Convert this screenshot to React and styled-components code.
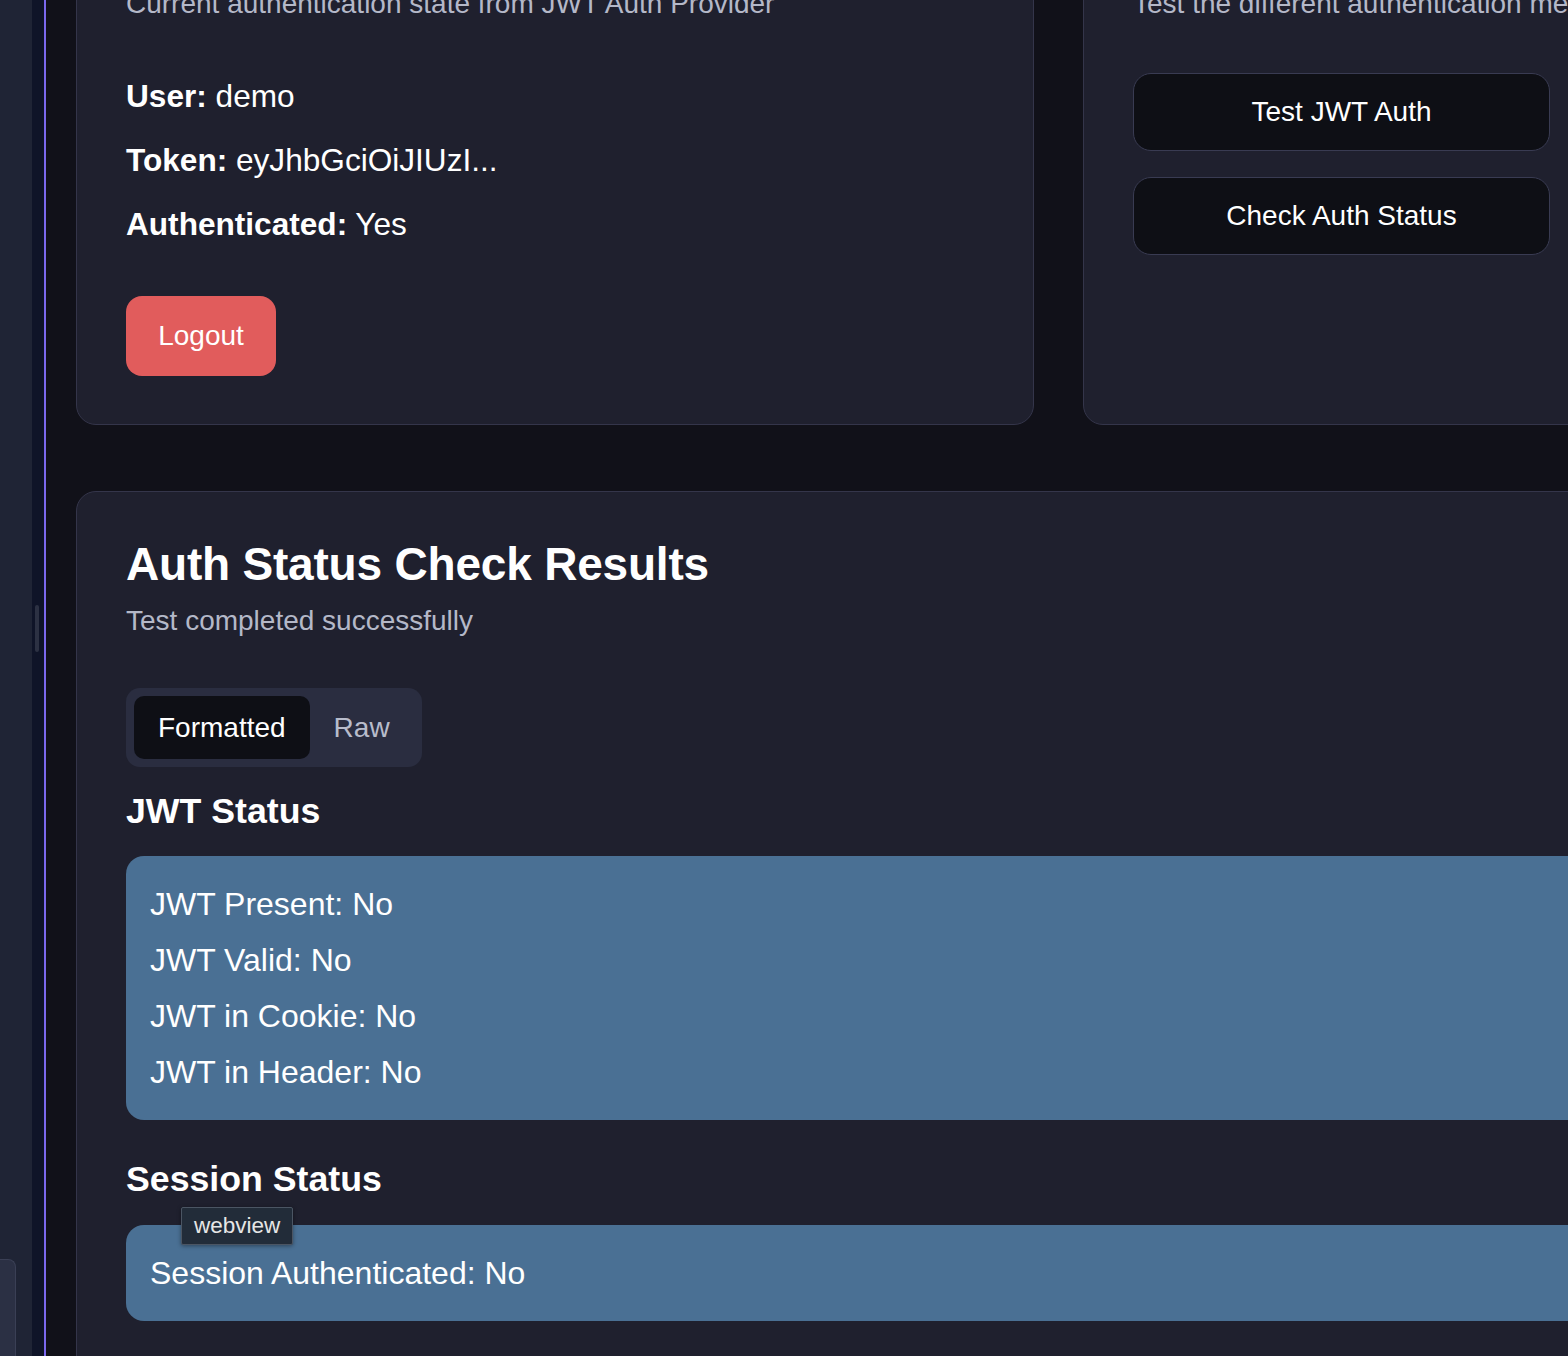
import React from 'react';
import styled, { createGlobalStyle } from 'styled-components';

const GlobalStyle = createGlobalStyle`
  html, body {
    margin: 0;
    padding: 0;
    background: #111119;
    overflow: hidden;
  }
  body {
    font-family: "Liberation Sans", Arial, Helvetica, sans-serif;
    color: #ffffff;
  }
`;

const Shell = styled.div`
  display: flex;
  width: 1568px;
  height: 1356px;
  overflow: hidden;
`;

const SideRail = styled.div`
  width: 32px;
  flex-shrink: 0;
  background: #1f2435;
  display: flex;
  flex-direction: column;
  justify-content: flex-end;
`;

const RailPanel = styled.div`
  width: 15px;
  height: 96px;
  background: #2b3044;
  border: 1px solid #3a3f55;
  border-left: none;
  border-bottom: none;
  border-top-right-radius: 8px;
`;

const Gutter = styled.div`
  width: 12px;
  flex-shrink: 0;
  background: #0f1428;
  display: flex;
  flex-direction: column;
  align-items: center;
  padding-top: 605px;
  box-sizing: border-box;
`;

const ResizeHandle = styled.div`
  width: 4px;
  height: 47px;
  margin-left: -2px;
  border-radius: 2px;
  background: #2c3143;
`;

const Divider = styled.div`
  width: 2px;
  flex-shrink: 0;
  background: #7b68ee;
`;

const Main = styled.main`
  flex: 1;
  min-width: 0;
  padding-left: 30px;
  overflow: hidden;
  background: #111119;
`;

const Content = styled.div`
  width: 1524px;
  margin-top: -68px;
  display: flex;
  flex-direction: column;
  gap: 66px;
`;

const TopRow = styled.div`
  display: grid;
  grid-template-columns: 958px 517px;
  column-gap: 49px;
`;

const Card = styled.section`
  width: ${(p) => p.$width || 'auto'};
  background: #1f202e;
  border: 1px solid #34354a;
  border-radius: 20px;
  padding: ${(p) => p.$padding || '50px 49px 48px'};
  box-sizing: border-box;
  display: flex;
  flex-direction: column;
  align-items: flex-start;
`;

const CardSubtitle = styled.p`
  margin: 0;
  font-size: 28px;
  line-height: 41px;
  color: #b4b8c8;
  white-space: nowrap;
`;

const InfoList = styled.div`
  margin-top: 49px;
  display: flex;
  flex-direction: column;
  gap: 17.5px;
`;

const InfoLine = styled.div`
  font-size: 31.6px;
  line-height: 46.5px;
  color: #ffffff;
  b {
    font-weight: 700;
  }
`;

const DangerButton = styled.button`
  margin-top: 48px;
  width: 150px;
  height: 80px;
  border: none;
  border-radius: 16px;
  background: #e15c5c;
  color: #ffffff;
  font-family: inherit;
  font-size: 28px;
`;

const ButtonStack = styled.div`
  margin-top: 49px;
  width: 100%;
  display: flex;
  flex-direction: column;
  gap: 26px;
`;

const ActionButton = styled.button`
  width: 100%;
  height: 78px;
  border: 1px solid #393b52;
  border-radius: 18px;
  background: #0e0f15;
  color: #ffffff;
  font-family: inherit;
  font-size: 28px;
`;

const ResultTitle = styled.h2`
  margin: 0;
  font-size: 46px;
  line-height: 55px;
  font-weight: 700;
  letter-spacing: -0.2px;
`;

const ResultSubtitle = styled(CardSubtitle)`
  margin-top: 8px;
`;

const TabList = styled.div`
  margin-top: 47px;
  display: flex;
  align-items: center;
  padding: 8px;
  background: #2a2d40;
  border-radius: 14px;
`;

const Tab = styled.button`
  height: 63px;
  padding: 2px ${(p) => (p.$active ? '24px' : '24px')} 0;
  border: none;
  border-radius: 10px;
  background: ${(p) => (p.$active ? '#0e0f15' : 'transparent')};
  color: ${(p) => (p.$active ? '#ffffff' : '#b8bccb')};
  font-family: inherit;
  font-size: 28px;
`;

const SectionTitle = styled.h3`
  margin: ${(p) => (p.$first ? '22px' : '37px')} 0 22px;
  font-size: 35.7px;
  line-height: 45.5px;
  font-weight: 700;
`;

const StatusBox = styled.div`
  position: relative;
  align-self: stretch;
  background: #4a7094;
  border-radius: 18px;
  padding: 20px 24px 20px;
`;

const StatusLine = styled.div`
  font-size: 32px;
  line-height: 56px;
  color: #ffffff;
`;

const Tooltip = styled.div`
  position: absolute;
  left: 55px;
  top: -18px;
  padding: 0 12px;
  height: 36px;
  line-height: 36px;
  background: #222c39;
  border: 1px solid #4b5563;
  border-radius: 2px;
  color: #e6e6e6;
  font-size: 22.5px;
  box-shadow: 0 1px 4px rgba(0, 0, 0, 0.4);
  z-index: 2;
`;

const jwtRows = [
  'JWT Present: No',
  'JWT Valid: No',
  'JWT in Cookie: No',
  'JWT in Header: No',
];

const App = () => {
  return (
    <>
      <GlobalStyle />
      <Shell>
        <SideRail>
          <RailPanel />
        </SideRail>
        <Gutter>
          <ResizeHandle />
        </Gutter>
        <Divider />
        <Main>
          <Content>
            <TopRow>
              <Card>
                <CardSubtitle>Current authentication state from JWT Auth Provider</CardSubtitle>
                <InfoList>
                  <InfoLine>
                    <b>User:</b> demo
                  </InfoLine>
                  <InfoLine>
                    <b>Token:</b> eyJhbGciOiJIUzI...
                  </InfoLine>
                  <InfoLine>
                    <b>Authenticated:</b> Yes
                  </InfoLine>
                </InfoList>
                <DangerButton>Logout</DangerButton>
              </Card>
              <Card>
                <CardSubtitle>Test the different authentication methods</CardSubtitle>
                <ButtonStack>
                  <ActionButton>Test JWT Auth</ActionButton>
                  <ActionButton>Check Auth Status</ActionButton>
                </ButtonStack>
              </Card>
            </TopRow>

            <Card $width="1600px" $padding="45px 49px 60px">
              <ResultTitle>Auth Status Check Results</ResultTitle>
              <ResultSubtitle>Test completed successfully</ResultSubtitle>
              <TabList>
                <Tab $active>Formatted</Tab>
                <Tab>Raw</Tab>
              </TabList>

              <SectionTitle $first>JWT Status</SectionTitle>
              <StatusBox>
                {jwtRows.map((row) => (
                  <StatusLine key={row}>{row}</StatusLine>
                ))}
              </StatusBox>

              <SectionTitle>Session Status</SectionTitle>
              <StatusBox>
                <Tooltip>webview</Tooltip>
                <StatusLine>Session Authenticated: No</StatusLine>
              </StatusBox>
            </Card>
          </Content>
        </Main>
      </Shell>
    </>
  );
};

export default App;
